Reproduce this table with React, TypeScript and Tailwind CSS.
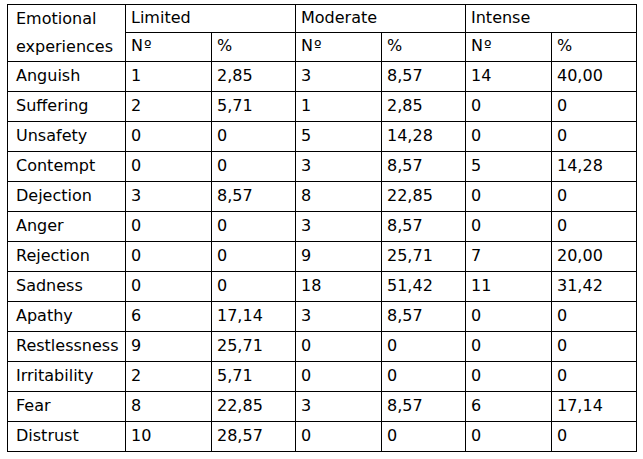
const rows: [string, string, string, string, string, string, string][] = [
  ["Anguish", "1", "2,85", "3", "8,57", "14", "40,00"],
  ["Suffering", "2", "5,71", "1", "2,85", "0", "0"],
  ["Unsafety", "0", "0", "5", "14,28", "0", "0"],
  ["Contempt", "0", "0", "3", "8,57", "5", "14,28"],
  ["Dejection", "3", "8,57", "8", "22,85", "0", "0"],
  ["Anger", "0", "0", "3", "8,57", "0", "0"],
  ["Rejection", "0", "0", "9", "25,71", "7", "20,00"],
  ["Sadness", "0", "0", "18", "51,42", "11", "31,42"],
  ["Apathy", "6", "17,14", "3", "8,57", "0", "0"],
  ["Restlessness", "9", "25,71", "0", "0", "0", "0"],
  ["Irritability", "2", "5,71", "0", "0", "0", "0"],
  ["Fear", "8", "22,85", "3", "8,57", "6", "17,14"],
  ["Distrust", "10", "28,57", "0", "0", "0", "0"],
]

function Cell({ children, first }: { children: React.ReactNode; first?: boolean }) {
  return (
    <div className={`bg-white flex items-center h-[29px] pb-[2px] ${first ? "pl-[8px]" : "pl-[5px]"}`}>
      {children}
    </div>
  )
}

const No = () => (
  <span>
    N<span className="ml-[1px]">º</span>
  </span>
)

export default function App() {
  return (
    <div className="w-[643px] h-[459px] bg-white pt-[4px] pl-[7px] text-black text-[16px] font-['DejaVu_Sans',sans-serif]">
      <div className="inline-grid grid-cols-[117px_85px_83px_85px_83px_85px_84px] grid-rows-[27px_28px] auto-rows-[29px] gap-px bg-black p-px">
        <div className="row-span-2 bg-white flex flex-col justify-center pl-[8px] pb-[1px] leading-[28px]">
          <span>Emotional</span>
          <span>experiences</span>
        </div>
        <div className="col-span-2 bg-white flex items-center pb-[2px] pl-[5px]">Limited</div>
        <div className="col-span-2 bg-white flex items-center pb-[2px] pl-[5px]">Moderate</div>
        <div className="col-span-2 bg-white flex items-center pb-[2px] pl-[5px]">Intense</div>
        {[0, 1, 2, 3, 4, 5].map((i) => (
          <div key={i} className="bg-white flex items-center pb-[2px] pl-[5px]">
            {i % 2 === 0 ? <No /> : "%"}
          </div>
        ))}
        {rows.map((r) =>
          r.map((v, j) => (
            <Cell key={r[0] + j} first={j === 0}>
              {v}
            </Cell>
          ))
        )}
      </div>
    </div>
  )
}
